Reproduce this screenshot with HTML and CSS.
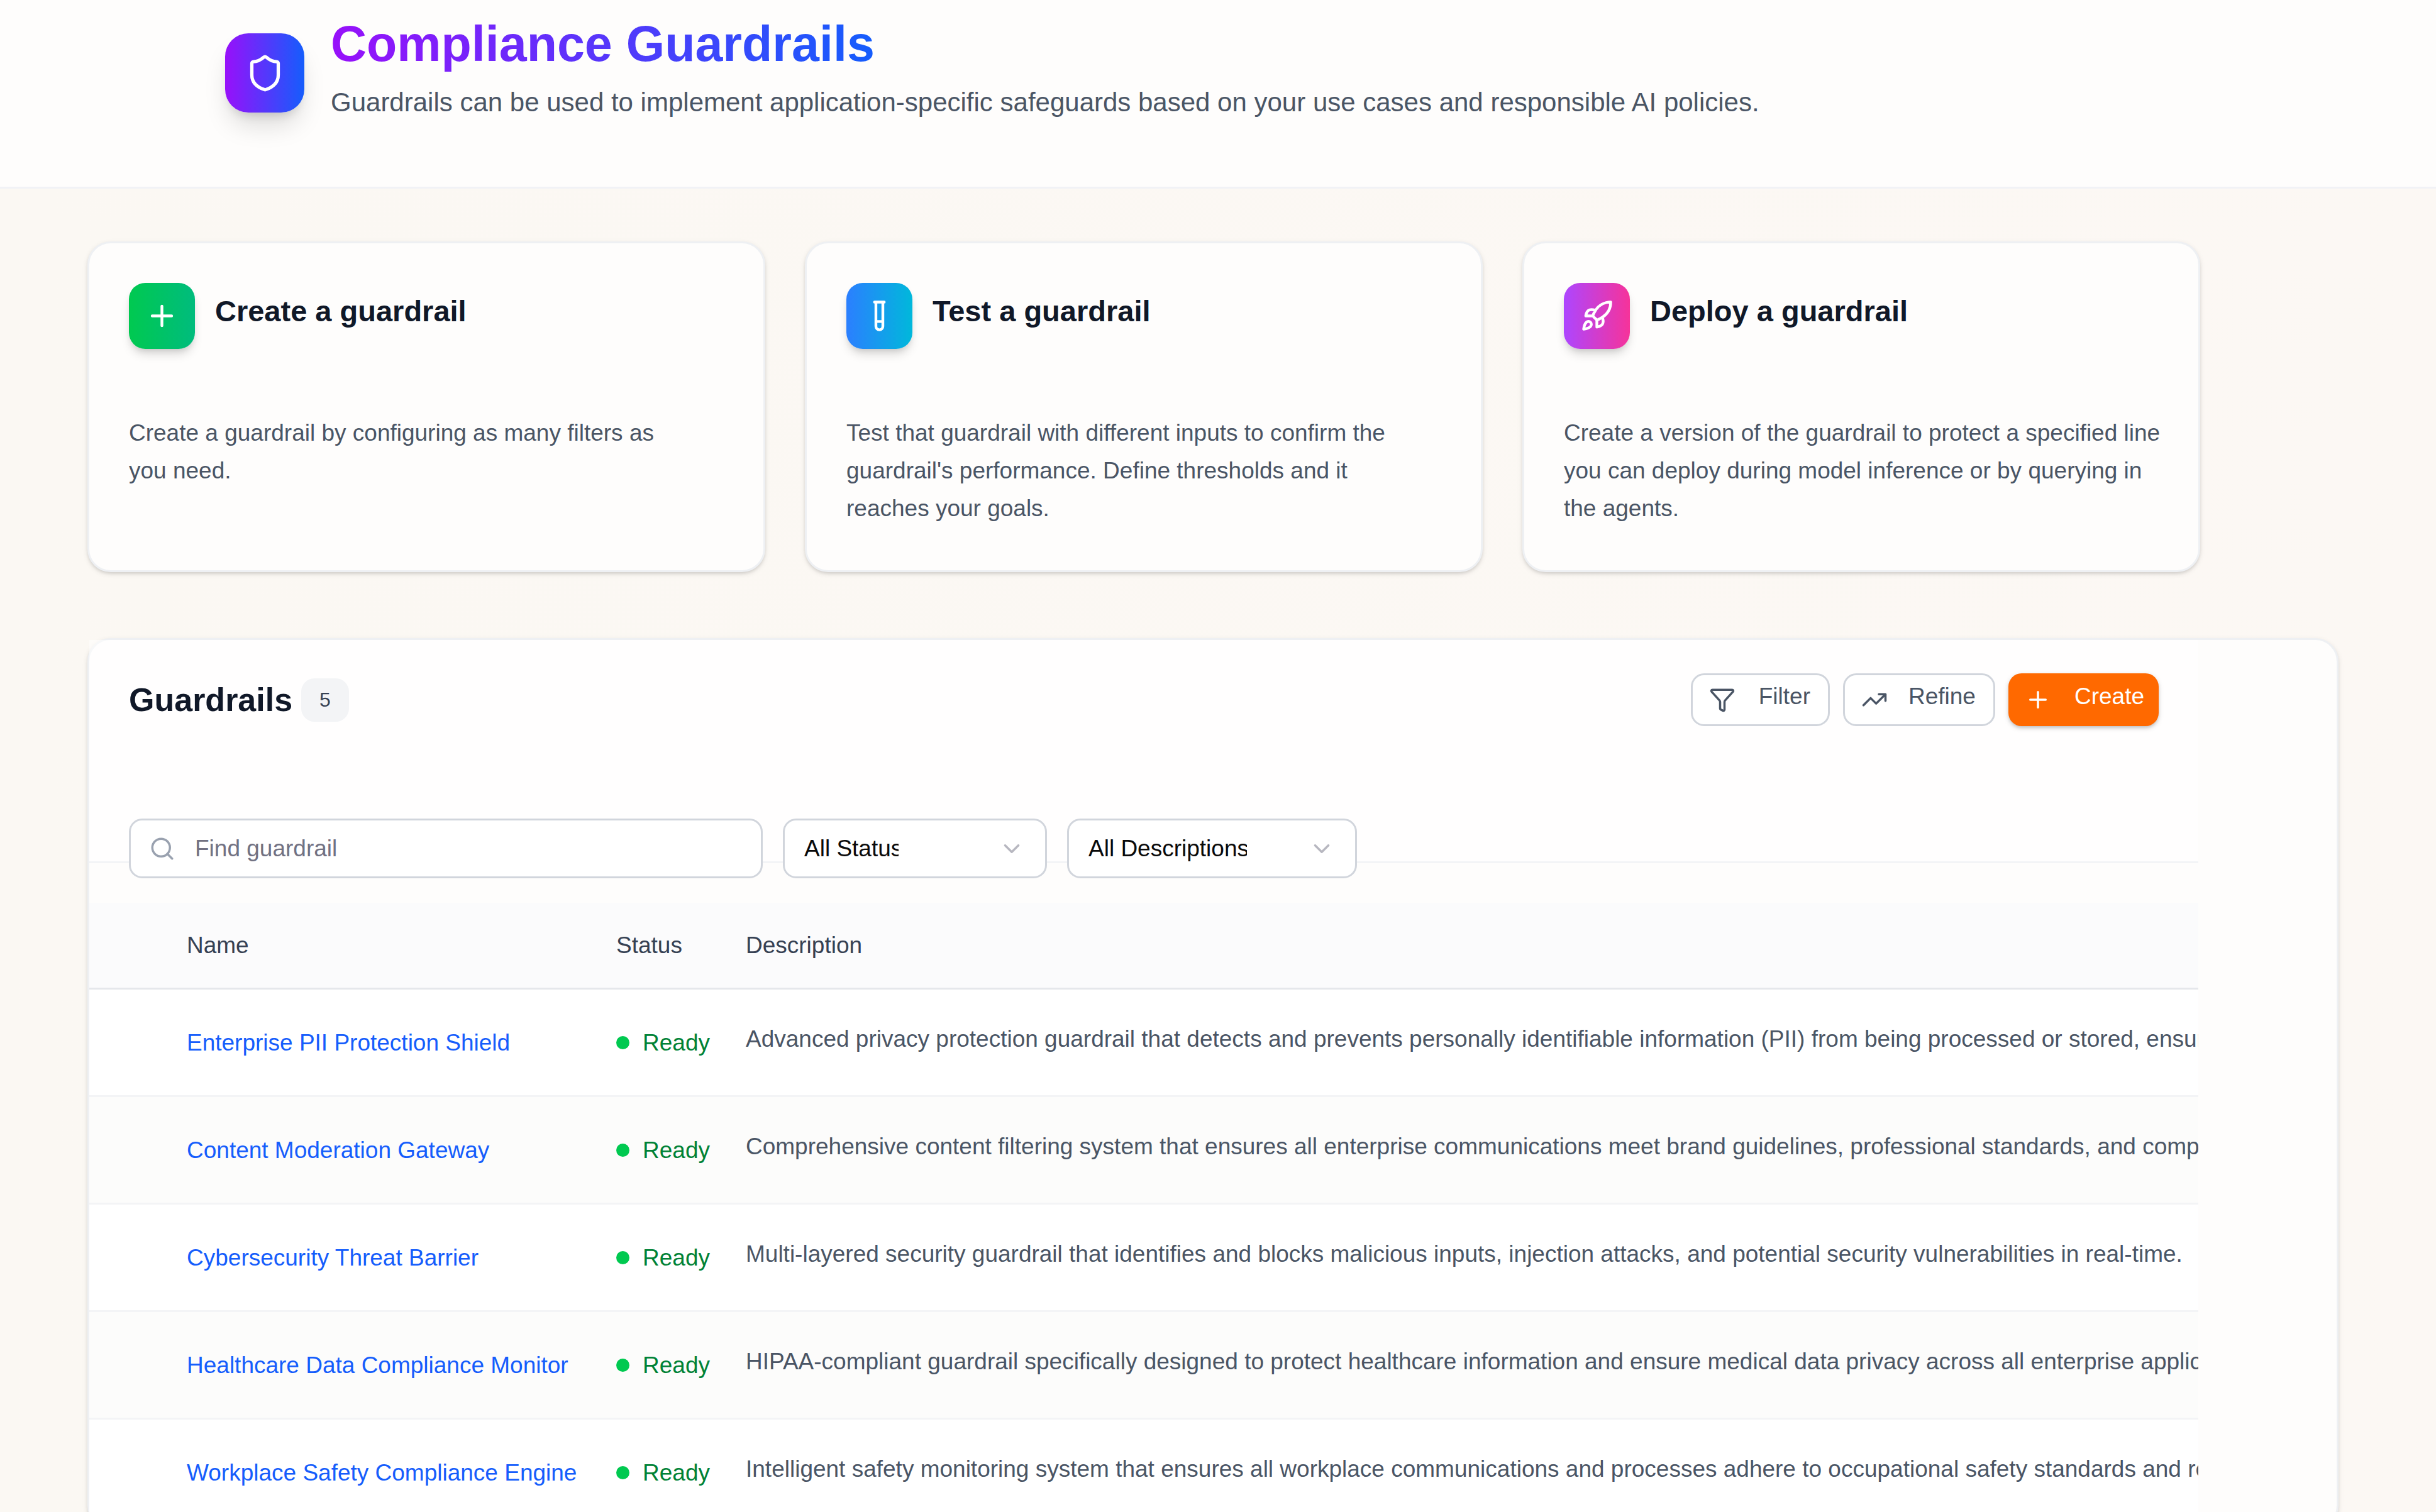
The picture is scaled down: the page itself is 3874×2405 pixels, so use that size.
FILE: index.html
```html
<!DOCTYPE html>
<html lang="en">
<head>
<meta charset="utf-8">
<meta name="viewport" content="width=device-width, initial-scale=1">
<title>Compliance Guardrails</title>
<link rel="stylesheet" href="styles.css">
</head>
<body>
<header class="page-header">
  <div class="page-icon"><svg class="icon icon-lg" viewBox="0 0 24 24" aria-hidden="true"><path d="M20 13c0 5-3.5 7.5-7.66 8.95a1 1 0 0 1-.67-.01C7.5 20.5 4 18 4 13V6a1 1 0 0 1 1-1c2 0 4.500-1.200 6.240-2.720a1.170 1.170 0 0 1 1.520 0C14.510 3.810 17 5 19 5a1 1 0 0 1 1 1z"/></svg></div>
  <div class="page-heading">
    <h1>Compliance Guardrails</h1>
    <p>Guardrails can be used to implement application-specific safeguards based on your use cases and responsible AI policies.</p>
  </div>
</header>

<main class="content">
  <section class="steps" aria-label="Getting started">
    <article class="card">
      <div class="card-head">
        <div class="card-icon green"><svg class="icon icon-md" viewBox="0 0 24 24" aria-hidden="true"><path d="M5 12h14M12 5v14"/></svg></div>
        <h2>Create a guardrail</h2>
      </div>
      <p>Create a guardrail by configuring as many filters as<br>you need.</p>
    </article>
    <article class="card">
      <div class="card-head">
        <div class="card-icon blue"><svg class="icon icon-md" viewBox="0 0 24 24" aria-hidden="true"><path d="M14.500 2v17.500c0 1.400-1.100 2.500-2.500 2.500s-2.500-1.100-2.500-2.500V2M8.500 2h7M14.500 16h-5"/></svg></div>
        <h2>Test a guardrail</h2>
      </div>
      <p>Test that guardrail with different inputs to confirm the<br>guardrail's performance. Define thresholds and it<br>reaches your goals.</p>
    </article>
    <article class="card">
      <div class="card-head">
        <div class="card-icon pink"><svg class="icon icon-md" viewBox="0 0 24 24" aria-hidden="true"><path d="M4.500 16.500c-1.500 1.260-2 5-2 5s3.740-.5 5-2c.71-.84.7-2.130-.09-2.910a2.180 2.180 0 0 0-2.910-.09zM12 15l-3-3a22 22 0 0 1 2-3.950A12.880 12.880 0 0 1 22 2c0 2.720-.78 7.500-6 11a22.350 22.350 0 0 1-4 2zM9 12H4s.55-3.030 2-4c1.620-1.080 5 0 5 0M12 15v5s3.030-.55 4-2c1.080-1.620 0-5 0-5"/></svg></div>
        <h2>Deploy a guardrail</h2>
      </div>
      <p>Create a version of the guardrail to protect a specified line<br>you can deploy during model inference or by querying in<br>the agents.</p>
    </article>
  </section>

  <section class="panel" aria-labelledby="panel-title">
    <div class="panel-body">
      <div class="panel-head">
        <div class="title-row">
          <h2 id="panel-title">Guardrails</h2>
          <span class="count">5</span>
          <div class="actions">
            <button type="button" class="btn"><svg class="icon" viewBox="0 0 24 24" aria-hidden="true"><path d="M10 20a1 1 0 0 0 .553.895l2 1A1 1 0 0 0 14 21v-7a2 2 0 0 1 .517-1.341L21.740 4.670A1 1 0 0 0 21 3H3a1 1 0 0 0-.742 1.670l7.225 7.989A2 2 0 0 1 10 14z"/></svg><span>Filter</span></button>
            <button type="button" class="btn btn-tight"><svg class="icon" viewBox="0 0 24 24" aria-hidden="true"><path d="M16 7h6v6M22 7l-8.500 8.500-5-5L2 17"/></svg><span>Refine</span></button>
            <button type="button" class="btn btn-primary"><svg class="icon" viewBox="0 0 24 24" aria-hidden="true"><path d="M5 12h14M12 5v14"/></svg><span>Create</span></button>
          </div>
        </div>
        <div class="filters">
          <label class="search">
            <svg class="icon" viewBox="0 0 24 24" aria-hidden="true"><circle cx="11" cy="11" r="8"/><path d="m21 21-4.340-4.340"/></svg>
            <input type="text" placeholder="Find guardrail" aria-label="Find guardrail">
          </label>
          <label class="select select-status">
            <select aria-label="Status"><option>All Status</option></select>
            <svg class="icon" viewBox="0 0 24 24" aria-hidden="true"><path d="m6 9 6 6 6-6"/></svg>
          </label>
          <label class="select select-description">
            <select aria-label="Description"><option>All Descriptions</option></select>
            <svg class="icon" viewBox="0 0 24 24" aria-hidden="true"><path d="m6 9 6 6 6-6"/></svg>
          </label>
        </div>
      </div>
      <div class="table-wrap">
        <table>
          <colgroup><col class="col-pick"><col class="col-name"><col class="col-status"><col></colgroup>
          <thead>
            <tr><th></th><th scope="col">Name</th><th scope="col">Status</th><th scope="col">Description</th></tr>
          </thead>
          <tbody>
            <tr><td></td><td><a href="#">Enterprise PII Protection Shield</a></td><td><span class="status">Ready</span></td><td class="desc">Advanced privacy protection guardrail that detects and prevents personally identifiable information (PII) from being processed or stored, ensuring</td></tr>
            <tr><td></td><td><a href="#">Content Moderation Gateway</a></td><td><span class="status">Ready</span></td><td class="desc">Comprehensive content filtering system that ensures all enterprise communications meet brand guidelines, professional standards, and compliance</td></tr>
            <tr><td></td><td><a href="#">Cybersecurity Threat Barrier</a></td><td><span class="status">Ready</span></td><td class="desc">Multi-layered security guardrail that identifies and blocks malicious inputs, injection attacks, and potential security vulnerabilities in real-time.</td></tr>
            <tr><td></td><td><a href="#">Healthcare Data Compliance Monitor</a></td><td><span class="status">Ready</span></td><td class="desc">HIPAA-compliant guardrail specifically designed to protect healthcare information and ensure medical data privacy across all enterprise applications.</td></tr>
            <tr><td></td><td><a href="#">Workplace Safety Compliance Engine</a></td><td><span class="status">Ready</span></td><td class="desc">Intelligent safety monitoring system that ensures all workplace communications and processes adhere to occupational safety standards and regulations.</td></tr>
          </tbody>
        </table>
      </div>
    </div>
  </section>
</main>
</body>
</html>
```

FILE: styles.css
```css
* { box-sizing: border-box; }

body {
  margin: 0;
  font-family: "Liberation Sans", Arial, sans-serif;
  font-size: 37px;
  line-height: 53px;
  color: #101828;
  background: linear-gradient(90deg, #fbf8f3, #fcf8f4);
}

h1, h2, p { margin: 0; }

.icon {
  width: 42px;
  height: 42px;
  flex: none;
  fill: none;
  stroke: currentColor;
  stroke-width: 2;
  stroke-linecap: round;
  stroke-linejoin: round;
}
.icon-md { width: 53px; height: 53px; }
.icon-lg { width: 63px; height: 63px; }

.page-header {
  display: flex;
  align-items: flex-start;
  gap: 42px;
  padding: 23px 358px 97px;
  background: #fefdfc;
  border-bottom: 3px solid #f1f2f6;
}
.page-icon {
  display: flex;
  align-items: center;
  justify-content: center;
  width: 126px;
  height: 126px;
  margin-top: 30px;
  border-radius: 37px;
  color: #fff;
  background: linear-gradient(90deg, #9810fa, #155dfc);
  box-shadow: 0 26px 40px -8px #00000026, 0 11px 16px -8px #00000026;
}
.page-heading { color: #4a5565; font-size: 42px; line-height: 74px; }
h1 {
  width: fit-content;
  margin-bottom: 9px;
  font-size: 79px;
  line-height: 94px;
  color: transparent;
  background: linear-gradient(90deg, #9810fa, #155dfc);
  background-clip: text;
}

.content { padding: 84px 155px 0 139px; }

.steps {
  display: grid;
  grid-template-columns: repeat(3, 1fr);
  gap: 63px;
  margin-right: 220px;
}
.card {
  min-height: 526px;
  padding: 63px 0 60px 63px;
  border: 3px solid #eef0f3;
  border-radius: 37px;
  background: #fefdfc;
  box-shadow: 0 3px 8px #0000001a, 0 3px 5px -1px #0000001a;
}
.card-head { display: flex; gap: 32px; height: 105px; margin-bottom: 104px; }
.card-icon {
  display: flex;
  align-items: center;
  justify-content: center;
  width: 105px;
  height: 105px;
  border-radius: 26px;
  color: #fff;
  box-shadow: 0 11px 16px -3px #00000026, 0 5px 11px -5px #00000026;
}
.green { background: linear-gradient(90deg, #00c950, #00bc7d); }
.blue { background: linear-gradient(90deg, #2b7fff, #00b8db); }
.pink { background: linear-gradient(90deg, #ad46ff, #f6339a); }
.card h2 { font-size: 47px; line-height: 90px; }
.card p { color: #4a5565; line-height: 60px; white-space: nowrap; }

.panel {
  margin-top: 105px;
  border: 3px solid #eef0f3;
  border-radius: 37px;
  background: #fefdfc;
  box-shadow: 0 3px 8px #0000001a, 0 3px 5px -1px #0000001a;
}
.panel-body { margin-right: 220px; }
.panel-head {
  padding: 53px 63px 0;
  border-bottom: 3px solid #f3f4f6;
  background: #ffffff80;
}
.title-row { display: flex; align-items: center; height: 84px; }
.title-row h2 { font-size: 52px; }
.count {
  margin-left: 14px;
  padding: 8px 29px;
  border-radius: 21px;
  font-size: 32px;
  color: #364153;
  background: #f3f4f6;
}
.actions { display: flex; gap: 21px; margin-left: auto; }
.btn {
  display: flex;
  align-items: center;
  gap: 37px;
  height: 84px;
  padding: 0 28px 0 26px;
  border: 3px solid #d1d5dc;
  border-radius: 21px;
  font: inherit;
  color: #4a5565;
  background: #fff;
}
.btn span { padding-bottom: 11px; }
.btn-tight { gap: 33px; }
.btn-primary {
  padding: 0 23px 0 26px;
  border: 0;
  color: #fff;
  background: #ff6900;
  box-shadow: 0 3px 8px #00000026, 0 3px 5px -1px #00000026;
}

.filters { display: flex; gap: 32px; margin: 147px 0 -27px; }
.search, .select {
  position: relative;
  display: flex;
  align-items: center;
  height: 95px;
  border: 3px solid #d1d5dc;
  border-radius: 21px;
  background: #fff;
}
.search {
  flex: 0 1 1008px;
  gap: 31px;
  padding: 0 29px;
  color: #99a1af;
}
.search input {
  flex: 1;
  min-width: 0;
  padding: 0;
  border: 0;
  font: inherit;
  color: #0a0a0a;
  background: none;
}
.search input::placeholder { color: #717182; }
.select select {
  width: 100%;
  height: 100%;
  padding: 0 0 0 31px;
  border: 0;
  appearance: none;
  font: inherit;
  color: #0a0a0a;
  background: none;
}
.select .icon { position: absolute; right: 32px; color: #717182; opacity: .5; }
.select-status { width: 420px; }
.select-status select { padding-right: 233px; }
.select-description { width: 461px; }
.select-description select { padding-right: 172px; }

.table-wrap { margin-top: 63px; overflow: hidden; }
table { width: 100%; table-layout: fixed; border-collapse: separate; border-spacing: 0; }
.col-pick { width: 134px; }
.col-name { width: 683px; }
.col-status { width: 206px; }
th, td { padding: 0 0 0 21px; text-align: left; white-space: nowrap; }
th {
  height: 138px;
  border-bottom: 3px solid #e5e7eb;
  font-weight: 400;
  color: #364153;
  background: #fbfbfc;
}
td { height: 171px; border-bottom: 3px solid #f3f4f6; background: #fff; }
tr:nth-child(even) td { background: #fcfcfb; }
td a { color: #155dfc; text-decoration: none; }
.status { display: flex; align-items: center; gap: 21px; color: #008236; }
.status::before { content: ""; width: 21px; height: 21px; border-radius: 50%; background: #00c950; }
.desc { padding-bottom: 11px; color: #4a5565; }
```
